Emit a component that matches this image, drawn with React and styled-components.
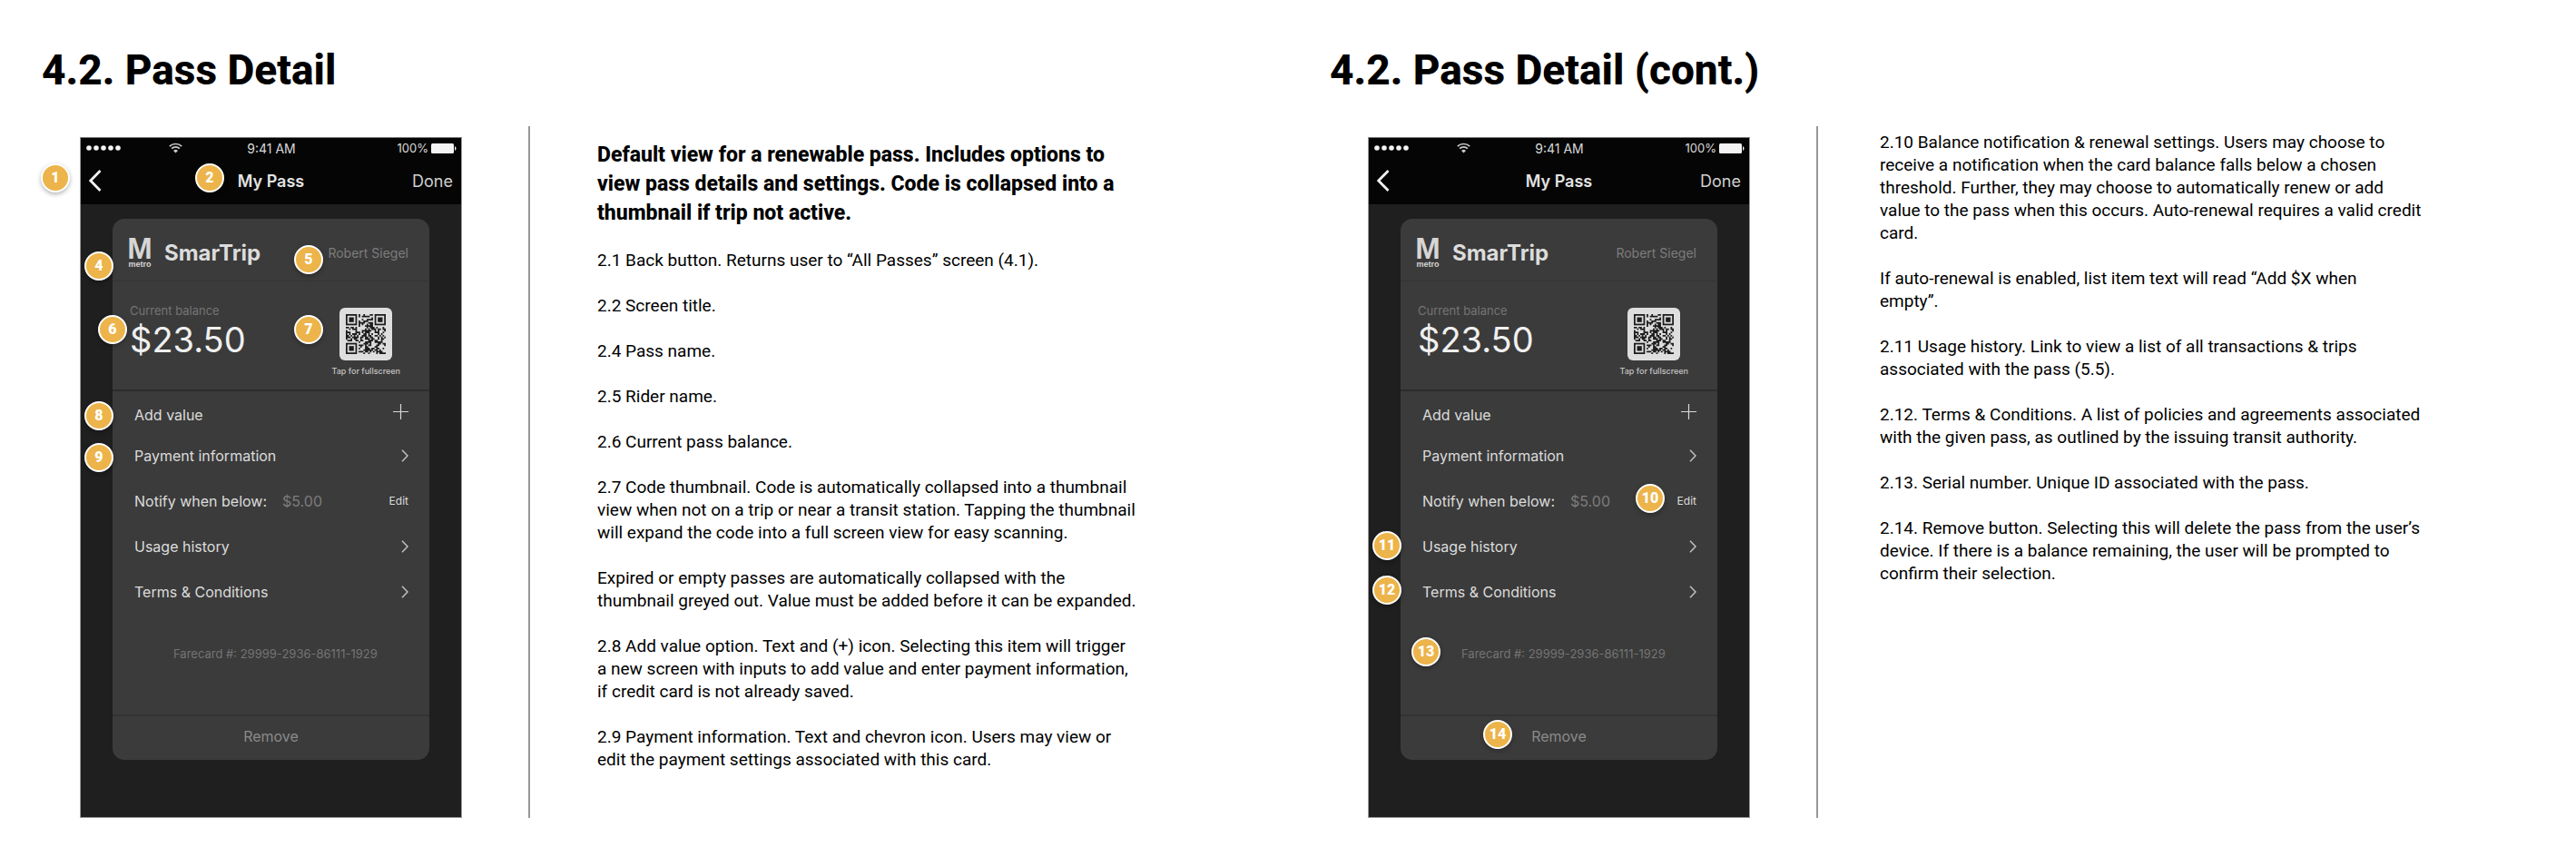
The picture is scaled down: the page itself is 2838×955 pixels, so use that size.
import React from 'react';
import styled, { createGlobalStyle } from 'styled-components';

const GlobalStyle = createGlobalStyle`
  *, *::before, *::after { box-sizing: border-box; }
  body {
    margin: 0;
    background: #fff;
    color: #000;
    font-family: Roboto, "Liberation Sans", sans-serif;
  }
  h1, h2, p { margin: 0; font-weight: inherit; }
  button { background: none; border: 0; padding: 0; margin: 0; font: inherit; color: inherit; cursor: pointer; }
  a { color: inherit; text-decoration: none; }
  svg { display: block; }
`;

/* ---------- document ---------- */

const Spread = styled.main`
  display: grid;
  grid-template-columns: 1fr 1fr;
  padding-bottom: 54px;
`;

const Slide = styled.section`
  padding-top: 50px;
`;

const SlideTitle = styled.h1`
  padding-left: 46px;
  font-size: 46px;
  line-height: 54px;
  font-weight: 800;
`;

const SlideBody = styled.div`
  display: flex;
  margin-top: 35px;
`;

const Figure = styled.div`
  position: relative;
  flex: 0 0 421px;
  margin: 12px 73px 0 88px;
`;

const Notes = styled.div`
  flex: 1;
  display: flex;
  flex-direction: column;
  gap: 25px;
  border-left: 2px solid #979797;
  padding: ${(p) => (p.$lead ? '16px 0 0 74px' : '5px 0 0 68px')};
`;

const Lead = styled.p`
  max-width: 597px;
  margin-bottom: -2px;
  font-size: 23px;
  line-height: 32px;
  font-weight: 800;
`;

const Note = styled.p`
  max-width: 597px;
  font-size: 19px;
  line-height: 25px;
  white-space: pre-line;
`;

const Marker = styled.span`
  position: absolute;
  left: ${(p) => p.$x}px;
  top: ${(p) => p.$y}px;
  width: 32px;
  height: 32px;
  margin: -16px 0 0 -16px;
  border: 2px solid #fff;
  border-radius: 50%;
  background: #ecb44a;
  box-shadow: 0 2px 5px rgba(0, 0, 0, 0.3);
  color: #fff;
  font-size: 16px;
  line-height: 28px;
  font-weight: 900;
  text-align: center;
`;

/* ---------- phone screen ---------- */

const Screen = styled.div`
  border: 1px solid #9a9a9a;
  border-top-color: #777;
  background: #1f1f1f;
  color: #dcdcdc;
  font-family: Inter, "Liberation Sans", sans-serif;
  padding-bottom: 63px;
`;

const Header = styled.header`
  background: #050505;
  color: #e2e2e2;
  height: 73px;
`;

const StatusBar = styled.div`
  display: grid;
  grid-template-columns: 1fr auto 1fr;
  align-items: center;
  height: 22px;
  padding: 0 5px 0 6px;
  font-size: 14px;
  color: #d8d8d8;
`;

const Signal = styled.div`
  display: flex;
  align-items: center;
  gap: 53px;
`;

const Battery = styled.div`
  display: flex;
  align-items: center;
  justify-content: flex-end;
  gap: 3px;
  font-size: 13px;
`;

const NavBar = styled.div`
  display: grid;
  grid-template-columns: 1fr auto 1fr;
  align-items: center;
  height: 50px;
  padding: 0 9px;
  font-size: 18px;
`;

const NavTitle = styled.h2`
  font-size: 18px;
  font-weight: 600;
`;

const DoneButton = styled.button`
  justify-self: end;
  color: #cfcfcf;
`;

const BackButton = styled.button`
  justify-self: start;
`;

const Card = styled.article`
  width: 349px;
  margin: 16px auto 0;
  border-radius: 13px;
  background: #3b3b3b;
`;

const CardHead = styled.div`
  display: flex;
  align-items: center;
  height: 69px;
  padding: 6px 23px 0 17px;
  border-bottom: 1px solid #333;
`;

const Logo = styled.div`
  display: flex;
  flex-direction: column;
  align-items: center;
  width: 26px;
  font-family: "Liberation Sans", sans-serif;
  font-weight: 700;
  color: #d6d6d6;
`;

const LogoLetter = styled.span`
  font-size: 33px;
  line-height: 26px;
`;

const LogoName = styled.span`
  font-size: 9px;
  line-height: 8px;
`;

const PassName = styled.span`
  flex: 1;
  padding-left: 14px;
  font-size: 24px;
  font-weight: 700;
  color: #dcdcdc;
`;

const RiderName = styled.span`
  font-size: 14px;
  color: #7c7c7c;
`;

const BalanceRow = styled.div`
  display: flex;
  justify-content: space-between;
  height: 121px;
  padding: 24px 32px 0 19px;
  border-bottom: 2px solid #2d2d2d;
`;

const BalanceLabel = styled.div`
  font-size: 13px;
  line-height: 16px;
  color: #747474;
`;

const Balance = styled.div`
  font-size: 38px;
  line-height: 48px;
  color: #f0f0f0;
`;

const CodeButton = styled.button`
  display: flex;
  flex-direction: column;
  align-items: center;
  align-self: flex-start;
  gap: 6px;
  padding-top: 5px;
  font-size: 9px;
  line-height: 12px;
  font-weight: 500;
  color: #c4c4c4;
`;

const CodeTile = styled.span`
  width: 58px;
  padding: 7px;
  border-radius: 6px;
  background: #dedede;
`;

const Row = styled.a`
  display: flex;
  align-items: center;
  justify-content: space-between;
  height: 50px;
  padding: 0 23px 0 24px;
  font-size: 16px;
  line-height: 24px;
`;

const AddRow = styled(Row)`
  align-items: flex-start;
  height: 46px;
  padding-top: 14px;
`;

const Threshold = styled.span`
  padding-left: 17px;
  color: #7c7c7c;
`;

const EditButton = styled.button`
  font-size: 12px;
`;

const Serial = styled.div`
  padding: 35px 0 59px 67px;
  font-size: 13px;
  line-height: 16px;
  color: #747474;
`;

const RemoveButton = styled.button`
  display: block;
  width: 100%;
  height: 50px;
  padding-bottom: 5px;
  border-top: 2px solid #333;
  font-size: 16px;
  color: #8a8a8a;
`;

/* ---------- drawings ---------- */

const Dots = () => (
  <svg width="38" height="6" viewBox="0 0 38 6" fill="#f4f4f4">
    {[3, 11, 19, 27, 35].map((x) => (
      <circle key={x} cx={x} cy="3" r="2.8" />
    ))}
  </svg>
);

const Wifi = () => (
  <svg width="15" height="12" viewBox="0 0 15 12" fill="none" stroke="#c8c8c8" strokeWidth="1.7">
    <path d="M0.8 4.2a9.6 9.6 0 0 1 13.4 0" />
    <path d="M3.1 6.7a6.3 6.3 0 0 1 8.8 0" />
    <path d="M7.5 11.6L5 8.9a3.6 3.6 0 0 1 5 0z" fill="#c8c8c8" stroke="none" />
  </svg>
);

const BatteryIcon = () => (
  <svg width="28" height="11" viewBox="0 0 28 11" fill="#f4f4f4">
    <rect width="25" height="11" rx="1.5" />
    <path d="M26 3.2c2 .6 2 4 0 4.6z" />
  </svg>
);

const BackIcon = () => (
  <svg width="14" height="24" viewBox="0 0 14 24" fill="none" stroke="#f0f0f0" strokeWidth="2.8">
    <path d="M12.5 1L1.8 12l10.7 11" />
  </svg>
);

const Chevron = () => (
  <svg width="8" height="14" viewBox="0 0 8 14" fill="none" stroke="#c0c0c0" strokeWidth="1.5">
    <path d="M1 .7L7 7l-6 6.3" />
  </svg>
);

const Plus = () => (
  <svg width="17" height="17" viewBox="0 0 17 17" stroke="#d8d8d8" strokeWidth="1.2">
    <path d="M8.5 0v17M0 8.5h17" />
  </svg>
);

const SIZE = 25;
const inFinder = (x, y) =>
  (x < 8 && y < 8) || (x > SIZE - 9 && y < 8) || (x < 8 && y > SIZE - 9);

const codeModules = (() => {
  let seed = 77;
  let d = '';
  for (let y = 0; y < SIZE; y += 1) {
    for (let x = 0; x < SIZE; x += 1) {
      seed = (seed * 1103515245 + 12345) % 2147483648;
      if (!inFinder(x, y) && seed / 2147483648 < 0.52) d += `M${x} ${y}h1v1h-1z`;
    }
  }
  return d;
})();

const Code = () => (
  <svg width="44" height="44" viewBox="0 0 25 25" fill="#1c1c1c">
    <path d={codeModules} />
    {[[0, 0], [18, 0], [0, 18]].map(([x, y]) => (
      <g key={`${x}-${y}`}>
        <rect x={x + 0.5} y={y + 0.5} width="6" height="6" fill="none" stroke="#1c1c1c" />
        <rect x={x + 2} y={y + 2} width="3" height="3" />
      </g>
    ))}
  </svg>
);

/* ---------- composition ---------- */

function PassScreen() {
  return (
    <Screen>
      <Header>
        <StatusBar>
          <Signal>
            <Dots />
            <Wifi />
          </Signal>
          <span>9:41 AM</span>
          <Battery>
            100%
            <BatteryIcon />
          </Battery>
        </StatusBar>
        <NavBar>
          <BackButton type="button" aria-label="Back">
            <BackIcon />
          </BackButton>
          <NavTitle>My Pass</NavTitle>
          <DoneButton type="button">Done</DoneButton>
        </NavBar>
      </Header>
      <Card>
        <CardHead>
          <Logo>
            <LogoLetter>M</LogoLetter>
            <LogoName>metro</LogoName>
          </Logo>
          <PassName>SmarTrip</PassName>
          <RiderName>Robert Siegel</RiderName>
        </CardHead>
        <BalanceRow>
          <div>
            <BalanceLabel>Current balance</BalanceLabel>
            <Balance>$23.50</Balance>
          </div>
          <CodeButton type="button">
            <CodeTile>
              <Code />
            </CodeTile>
            Tap for fullscreen
          </CodeButton>
        </BalanceRow>
        <AddRow href="#add-value">
          Add value
          <Plus />
        </AddRow>
        <Row href="#payment">
          Payment information
          <Chevron />
        </Row>
        <Row as="div">
          <span>
            Notify when below:
            <Threshold>$5.00</Threshold>
          </span>
          <EditButton type="button">Edit</EditButton>
        </Row>
        <Row href="#usage">
          Usage history
          <Chevron />
        </Row>
        <Row href="#terms">
          Terms &amp; Conditions
          <Chevron />
        </Row>
        <Serial>Farecard #: 29999-2936-86111-1929</Serial>
        <RemoveButton type="button">Remove</RemoveButton>
      </Card>
    </Screen>
  );
}

const slides = [
  {
    title: '4.2. Pass Detail',
    lead: 'Default view for a renewable pass. Includes options to view pass details and settings. Code is collapsed into a thumbnail if trip not active.',
    notes: [
      '2.1 Back button. Returns user to “All Passes” screen (4.1).',
      '2.2 Screen title.',
      '2.4 Pass name.',
      '2.5 Rider name.',
      '2.6 Current pass balance.',
      '2.7 Code thumbnail. Code is automatically collapsed into a thumbnail view when not on a trip or near a transit station. Tapping the thumbnail will expand the code into a full screen view for easy scanning.',
      'Expired or empty passes are automatically collapsed with the thumbnail greyed out. Value must be added before it can be expanded.',
      '2.8 Add value option. Text and (+) icon. Selecting this item will trigger a new screen with inputs to add value and enter payment information, if credit card is not already saved.',
      '2.9 Payment information. Text and chevron icon. Users may view or edit the payment settings associated with this card.',
    ],
    markers: [
      [1, -27, 45],
      [2, 143, 45],
      [4, 21, 142],
      [5, 252, 135],
      [6, 36, 212],
      [7, 252, 212],
      [8, 21, 307],
      [9, 21, 353],
    ],
  },
  {
    title: '4.2. Pass Detail (cont.)',
    notes: [
      '2.10 Balance notification & renewal settings. Users may choose to receive a notification when the card balance falls below a chosen threshold. Further, they may choose to automatically renew or add value to the pass when this occurs. Auto-renewal requires a valid credit card.',
      'If auto-renewal is enabled, list item text will read “Add $X when\nempty”.',
      '2.11 Usage history. Link to view a list of all transactions & trips associated with the pass (5.5).',
      '2.12. Terms & Conditions. A list of policies and agreements associated with the given pass, as outlined by the issuing transit authority.',
      '2.13. Serial number. Unique ID associated with the pass.',
      '2.14. Remove button. Selecting this will delete the pass from the user’s device. If there is a balance remaining, the user will be prompted to confirm their selection.',
    ],
    markers: [
      [10, 311, 398],
      [11, 21, 450],
      [12, 21, 499],
      [13, 64, 567],
      [14, 143, 658],
    ],
  },
];

export default function App() {
  return (
    <>
      <GlobalStyle />
      <Spread>
        {slides.map((slide) => (
          <Slide key={slide.title}>
            <SlideTitle>{slide.title}</SlideTitle>
            <SlideBody>
              <Figure>
                <PassScreen />
                {slide.markers.map(([n, x, y]) => (
                  <Marker key={n} $x={x} $y={y}>
                    {n}
                  </Marker>
                ))}
              </Figure>
              <Notes $lead={Boolean(slide.lead)}>
                {slide.lead && <Lead>{slide.lead}</Lead>}
                {slide.notes.map((note) => (
                  <Note key={note}>{note}</Note>
                ))}
              </Notes>
            </SlideBody>
          </Slide>
        ))}
      </Spread>
    </>
  );
}
